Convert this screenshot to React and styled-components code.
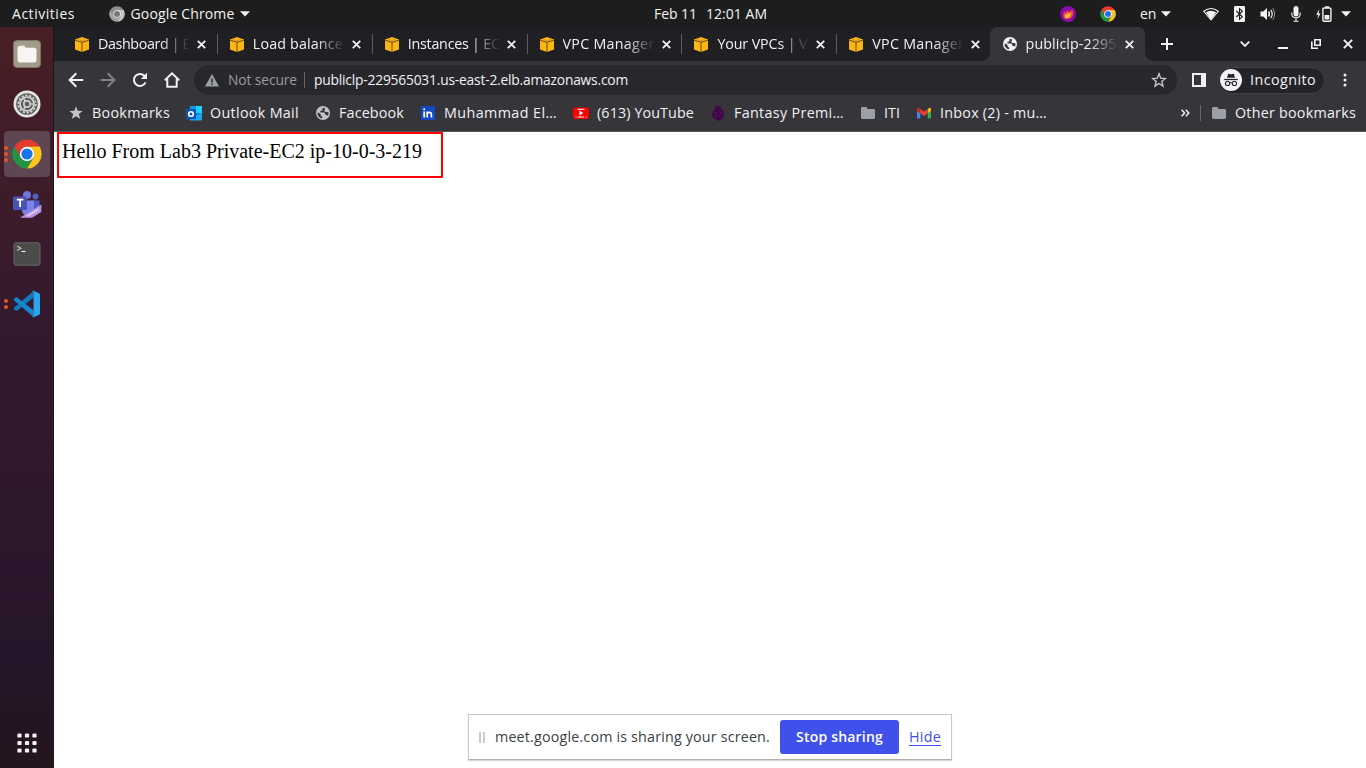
import React, { useLayoutEffect, useRef, useState } from "react";
import styled, { createGlobalStyle, css } from "styled-components";

const UI_FONT = '"Open Sans", "Noto Sans", sans-serif';

const GlobalStyle = createGlobalStyle`
  * { box-sizing: border-box; }
  html, body { margin: 0; height: 100%; overflow: hidden; }
  body { font-family: ${UI_FONT}; font-size: 14.3px; line-height: 20px; color: #f1f1f2; }
  svg { display: block; flex: none; }
`;

/* ---------- text that keeps a fixed advance width ---------- */

const FitBox = styled.span`
  flex: none;
  display: block;
  width: ${(p) => p.$w}px;
  white-space: pre;
  overflow: visible;
`;

function Fit({ w, children, className }) {
  const ref = useRef(null);
  const [spacing, setSpacing] = useState(0);
  useLayoutEffect(() => {
    const natural = ref.current.getBoundingClientRect().width;
    setSpacing((w - natural) / children.length);
  }, [w, children]);
  return (
    <FitBox $w={w} className={className}>
      <span ref={ref} style={{ letterSpacing: `${spacing}px` }}>{children}</span>
    </FitBox>
  );
}

/* ---------- page frame ---------- */

const Desktop = styled.div`
  width: 1366px;
  height: 768px;
  display: flex;
  flex-direction: column;
  overflow: hidden;
`;

const Body = styled.div`
  flex: 1;
  display: flex;
  min-height: 0;
`;

const Window = styled.div`
  flex: 1;
  min-width: 0;
  display: flex;
  flex-direction: column;
  background: #fff;
`;

/* ---------- system bar ---------- */

const SystemBar = styled.header`
  height: 27px;
  flex: none;
  display: flex;
  align-items: center;
  background: #1d1d1d;
  color: #f2f2f2;
  padding: 0 15px 0 12px;
  font-size: 14px;
`;

const Group = styled.div`
  display: flex;
  align-items: center;
  gap: ${(p) => p.$gap || 0}px;
  margin-left: ${(p) => p.$ml || 0}px;
`;

const Push = styled.div`
  flex: 1;
`;

/* ---------- dock ---------- */

const Dock = styled.nav`
  width: 54px;
  flex: none;
  display: flex;
  flex-direction: column;
  padding: 2px 0 0;
  border-right: 1px solid #20121c;
  background: linear-gradient(#481f22 0%, #431d27 12%, #3a1b2b 28%, #32192f 42%, #2f182e 60%, #26152a 85%, #24151e 100%);
`;

const DockSlot = styled.div`
  height: 50px;
  display: flex;
  align-items: center;
  justify-content: center;
  padding-left: 1px;
  position: relative;
`;

const DockTile = styled.div`
  width: 46px;
  height: 46px;
  border-radius: 4px;
  display: flex;
  align-items: center;
  justify-content: center;
  background: ${(p) => (p.$active ? "#5e4652" : "transparent")};
`;

const RunDots = styled.div`
  position: absolute;
  left: 4px;
  top: 0;
  bottom: 0;
  display: flex;
  flex-direction: column;
  justify-content: center;
  gap: 2px;
`;

const RunDot = styled.i`
  width: 4px;
  height: 4px;
  border-radius: 2px;
  background: #e95420;
`;

const AppsSlot = styled(DockSlot)`
  margin-top: auto;
`;

/* ---------- tabs ---------- */

const TabStrip = styled.div`
  height: 34px;
  flex: none;
  display: flex;
  align-items: center;
  background: #202024;
  padding: 0 13px 0 9px;
`;

const TabBox = styled.div`
  width: 154.85px;
  height: 34px;
  flex: none;
  display: flex;
  align-items: center;
  padding-left: 12px;
  position: relative;
  ${(p) => p.$line && css`
    &::after {
      content: "";
      position: absolute;
      right: 0;
      top: 7px;
      width: 1px;
      height: 20px;
      background: #5b5b60;
    }
  `}
  ${(p) => p.$active && css`
    width: 155px;
    margin-left: -2px;
    padding-left: 12.5px;
    background: #36353a;
    border-radius: 8px 8px 0 0;
    &::before, &::after {
      content: "";
      position: absolute;
      bottom: 0;
      width: 8px;
      height: 8px;
    }
    &::before { left: -8px; background: radial-gradient(circle at 0 0, transparent 7.5px, #36353a 8px); }
    &::after { right: -8px; background: radial-gradient(circle at 100% 0, transparent 7.5px, #36353a 8px); }
  `}
`;

const TabTitle = styled.div`
  width: 92px;
  margin: 0 7px 1px 9px;
  mask-image: linear-gradient(to right, #000 68%, transparent 100%);
`;

/* ---------- toolbar ---------- */

const Toolbar = styled.div`
  height: 36px;
  flex: none;
  display: flex;
  align-items: center;
  background: #36353a;
  padding: 2px 16px 0 14px;
`;

const Omnibox = styled.div`
  width: 983px;
  height: 30px;
  margin-left: 14px;
  border-radius: 15px;
  background: #28272c;
  display: flex;
  align-items: center;
  padding: 0 10px 0 11px;
  font-size: 13.8px;
`;

const Muted = styled(Fit)`
  color: #9a9ba0;
`;

const Divider = styled.i`
  width: 1px;
  height: ${(p) => p.$h}px;
  background: #66666b;
`;

const IncognitoPill = styled.div`
  width: 107px;
  height: 27px;
  margin: 0 11px 0 12px;
  border-radius: 14px;
  border: 1px solid #414045;
  background: #242428;
  display: flex;
  align-items: center;
  gap: 8px;
  padding-left: 1px;
`;

const BookmarkBar = styled.div`
  height: 35px;
  flex: none;
  display: flex;
  align-items: center;
  gap: 16px;
  background: #36353a;
  border-bottom: 1px solid #56565a;
  padding: 0 10px 2px 14px;
`;

const BookmarkItem = styled.div`
  display: flex;
  align-items: center;
  gap: 8px;
`;

const BookmarkLabel = styled(Fit)`
  padding-bottom: 1px;
`;

const Overflow = styled.div`
  display: flex;
  align-items: center;
  gap: 10px;
`;

/* ---------- page ---------- */

const Page = styled.main`
  flex: 1;
  position: relative;
  background: #fff;
`;

const Greeting = styled.div`
  width: 386px;
  height: 46px;
  margin-left: 3px;
  border: 2px solid #f00;
  border-radius: 1px;
  padding: 6px 0 0 3px;
  color: #000;
  font: 20px/23px "Liberation Serif", serif;
`;

const ShareBar = styled.div`
  position: absolute;
  left: 414px;
  top: 582px;
  width: 484px;
  height: 46px;
  display: flex;
  align-items: center;
  padding-left: 10px;
  background: #fff;
  border: 1px solid #c6c6c6;
  border-bottom-color: #b0b0b0;
  box-shadow: 0 1px 1px #d8d8d8;
  color: #3c4043;
`;

const Grip = styled.i`
  width: 6px;
  height: 11px;
  margin-right: 10px;
  border: solid #cbcbcb;
  border-width: 0 2px;
`;

const StopButton = styled.button`
  width: 119px;
  height: 34px;
  margin: 0 10px;
  padding: 0 0 1px 16px;
  border: 0;
  border-radius: 3px;
  background: #3f51ea;
  color: #fff;
  font: 600 14px ${UI_FONT};
  text-align: left;
`;

const HideLink = styled.a`
  color: #3f51ea;
  line-height: 17px;
  border-bottom: 1px solid #3f51ea;
`;

/* ---------- icons ---------- */

const ChromeLogo = ({ size, grey }) => {
  const arm = "M43.5 13A22.5 22.5 0 0 0 4.5 13L14.5 30 24 24V13Z";
  return (
    <svg width={size} height={size} viewBox="1 1 46 46">
      <path d={arm} fill={grey ? "#8c8c8c" : "#e33b2e"} />
      <path d={arm} fill={grey ? "#c4c4c4" : "#fcc31e"} transform="rotate(120 24 24)" />
      <path d={arm} fill={grey ? "#a2a2a2" : "#229342"} transform="rotate(240 24 24)" />
      <circle cx="24" cy="24" r="11" fill={grey ? "#e9e9e9" : "#fff"} />
      <circle cx="24" cy="24" r="8.6" fill={grey ? "#777" : "#1a73e8"} />
    </svg>
  );
};

const Caret = () => (
  <svg width="10" height="6" viewBox="0 0 10 6"><path d="M0 .3h10L5 5.6Z" fill="#f2f2f2" /></svg>
);

const AwsCube = () => (
  <svg width="14" height="15" viewBox="0 0 14 15">
    <path d="M0 2.4 7 0l7 2.4v10.2L7 15l-7-2.4Z" fill="#fbb616" />
    <path d="M.2 3.3 7 5.3l6.8-2M7 5.3V15" fill="none" stroke="#5c420c" strokeWidth=".9" />
    <path d="M3.2 2.7 7 3.7l3.8-1" fill="none" stroke="#b98510" strokeWidth=".6" />
  </svg>
);

const Globe = ({ color = "#f1f1f2", hole = "#36353a", size = 16, box = "0 0 16 16" }) => (
  <svg width={size} height={size} viewBox={box}>
    <circle cx="8" cy="8" r="7" fill={color} />
    <path d="M9.200 2.600 7.400 3.500v1.700l-2 .7v1.500h3.800l1.100 1.200v1.500h1.600l1 .8A5.500 5.500 0 0 0 13.500 7.600l-1-.5h-2.300l-1-1.300.9-1.600ZM2.500 7.800a5.600 5.600 0 0 0 4.700 5.600v-1.700l-1.500-1.200V9.300L4 7.800Z" fill={hole} />
  </svg>
);

const CloseX = ({ size = 9, w = 1.9 }) => (
  <svg width={size} height={size} viewBox="0 0 9 9"><path d="m.8.8 7.4 7.4m0-7.4L.8 8.2" stroke="#f1f1f2" strokeWidth={w} /></svg>
);

const NavIcon = ({ color = "#f1f1f2", children }) => (
  <svg width="16" height="16" viewBox="0 0 16 16" fill="none" stroke={color} strokeWidth="2">{children}</svg>
);

const Folder = () => (
  <svg width="16" height="16" viewBox="0 0 16 16"><path d="M1 3.4Q1 2 2.4 2h3.8l1.6 2h5.8Q15 4 15 5.4v7.2q0 1.4-1.4 1.4H2.4Q1 14 1 12.6Z" fill="#9aa0a6" /></svg>
);

const bookmarkIcons = {
  star: (
    <svg width="16" height="16" viewBox="0 0 16 16"><path d="m8 1.3 1.7 4.5 5 .2-3.9 3 1.4 4.9L8 11.2l-4.2 2.7L5.200 9 1.300 6l5-.2Z" fill="#bfc2c8" /></svg>
  ),
  outlook: (
    <svg width="16" height="16" viewBox="0 0 16 16">
      <path d="M4 1h12v14H4Z" fill="#0a8be0" />
      <path d="M4 1h6v6H4Z" fill="#1494e8" />
      <path d="M10 1h6v7h-6Z" fill="#1fd0fa" />
      <path d="m3 15 13-7v6q0 1.500-1 1.500H4Z" fill="#1da4f2" />
      <rect y="4" width="10" height="10" rx="1" fill="#0a57b8" />
      <circle cx="5" cy="9" r="2.300" fill="none" stroke="#fff" strokeWidth="1.600" />
    </svg>
  ),
  globe: <Globe color="#bfc2c8" />,
  linkedin: (
    <svg width="16" height="16" viewBox="0 0 16 16">
      <rect x="1" y="1" width="14" height="14" fill="#1448c4" />
      <path d="M4.200 6.500V12.500M7.200 12.500V6.500M7.200 9.500Q7.200 7.300 9.300 7.300T11.400 9.500V12.500" fill="none" stroke="#fff" strokeWidth="1.700" />
      <circle cx="4.200" cy="4.200" r="1.050" fill="#fff" />
    </svg>
  ),
  youtube: (
    <svg width="16" height="16" viewBox="0 0 16 16">
      <rect y="2.500" width="16" height="11.500" rx="2.500" fill="#f00" />
      <path d="M4.500 4.300h7M2.500 12h1.200M5 12h6M12.500 12h1" stroke="#fff" strokeWidth="1" />
      <path d="M6.500 5.600 10.300 8l-3.800 2.400Z" fill="#fff" />
    </svg>
  ),
  lion: (
    <svg width="16" height="16" viewBox="0 0 16 16">
      <path d="M5 3.800 4.300 1l2 1L7.500.300 8.800 1.800 11 .800l-.5 2.900q3.300 1.300 3.500 5 0 3-2 4.500l-1.500 2.500-3.500-.4-2.500-2.300-2.300-.3.3-2.200-.7-1.300 1.200-1.400Q3 5 5 3.800Z" fill="#41054a" />
      <path d="m4.500 7.500 2 .5M5 11l2-.6M9.500 6l1.500 2.500" stroke="#6d2c6b" strokeWidth=".6" fill="none" />
    </svg>
  ),
  folder: <Folder />,
  gmail: (
    <svg width="16" height="16" viewBox="0 0 16 16">
      <path d="M1 4.500 4.300 7v6.500H2q-1 0-1-1Z" fill="#4285f4" />
      <path d="M15 4.500 11.700 7v6.500H14q1 0 1-1Z" fill="#34a853" />
      <path d="M11.700 4 13 3q2-.7 2 1.500v1.200l-3.300 2.500Z" fill="#fbbc04" />
      <path d="M1 4.500Q1 2.300 3 3l5 3.700L11.700 4v4.200L8 11 1 5.700Z" fill="#ea4335" />
      <path d="M1 4.500Q1 2.300 3 3l1.300 1v4.200L1 5.700Z" fill="#c5221f" />
    </svg>
  ),
};

const Incognito = () => (
  <svg width="22" height="22" viewBox="0 0 22 22">
    <circle cx="11" cy="11" r="11" fill="#f1f3f4" />
    <path d="m7 8.800 1.200-4 2.800.5 2.800-.5 1.200 4Z" fill="#27272b" />
    <path d="M4.200 10.500h13.600" stroke="#27272b" strokeWidth="1.200" />
    <circle cx="7.600" cy="14.400" r="2.100" fill="none" stroke="#27272b" strokeWidth="1.100" />
    <circle cx="14.400" cy="14.400" r="2.100" fill="none" stroke="#27272b" strokeWidth="1.100" />
    <path d="M9.700 14q1.300-.7 2.600 0" fill="none" stroke="#27272b" />
  </svg>
);

const FilesIcon = () => (
  <svg width="28" height="28" viewBox="0 0 28 28">
    <rect x=".5" y=".5" width="27" height="27" rx="3.500" fill="#a29a88" stroke="#7b7464" />
    <path d="M4.500 8q0-2.500 2.500-2.500h4q1 0 1.500 1.500h-8Z" fill="#dcd8cf" />
    <path d="M4.500 8.500q0-2 2-2h4.500l2 1.200h8q2.500 0 2.500 2.500v9.500q0 2.800-2.800 2.800H7.300q-2.800 0-2.800-2.800Z" fill="#f7f5f1" />
  </svg>
);

const SettingsIcon = () => (
  <svg width="28" height="28" viewBox="0 0 28 28">
    <circle cx="14" cy="14" r="13.500" fill="#e4e4e2" />
    <circle cx="14" cy="14" r="10.800" fill="#5b5d5c" />
    <circle cx="14" cy="14" r="8.700" fill="none" stroke="#d4d5d3" strokeWidth="1.700" strokeDasharray="2.300 1.600" />
    <circle cx="14" cy="14" r="7" fill="none" stroke="#d4d5d3" strokeWidth="1.700" />
    <circle cx="14" cy="14" r="3.200" fill="none" stroke="#cfd0ce" strokeWidth="1.700" />
    <path d="M17 14h4M12.400 11.300l-2-3.500M12.400 16.700l-2 3.500" stroke="#cfd0ce" strokeWidth="1.400" />
  </svg>
);

const TeamsIcon = () => (
  <svg width="30" height="30" viewBox="0 -1.500 30 30">
    <circle cx="15" cy="4.500" r="4" fill="#6f76d9" />
    <circle cx="23.500" cy="6" r="2.900" fill="#5560c4" />
    <path d="M19 10h8.500v7q0 5-5 5H19Z" fill="#505ac0" />
    <path d="M10 10h12v9q0 6-6 6t-6-6Z" fill="#7b83eb" />
    <rect x="1" y="6" width="14" height="13.500" rx="1.200" fill="#4a52b4" />
    <path d="M4.800 9.200h6.600M8.100 9.200V16.500" stroke="#fff" strokeWidth="1.800" />
    <path d="M8 27.300 29.300 14v7.500L20 27.300Z" fill="#b695e8" />
    <path d="m15.500 25.500 11.500-7" stroke="#f0e6fb" strokeWidth="2" strokeDasharray="1.100 .8" />
  </svg>
);

const TerminalIcon = () => (
  <svg width="28" height="24" viewBox="0 0 28 24">
    <rect x="1" y=".8" width="26" height="22.400" rx="2" fill="#4b4b4a" stroke="#686765" />
    <path d="m4 4 4 2.200-4 2.200" fill="none" stroke="#c4c4c3" strokeWidth="1.100" />
    <path d="M8.500 9.500h4" stroke="#f2f2f2" strokeWidth="1.100" />
  </svg>
);

const VsCodeIcon = () => (
  <svg width="28" height="28" viewBox="0 0 28 28">
    <path d="M20.500 1v6.800L4.300 20.600q-.8.500-1.500 0L1.200 19.200q-.8-.8 0-1.700Z" fill="#0f79bd" />
    <path d="M20.500 27v-6.800L4.300 7.400q-.8-.5-1.500 0L1.200 8.800q-.8.800 0 1.700Z" fill="#1486cc" />
    <path d="M20.500.800 26 3.300q1 .5 1 1.500v18.400q0 1-1 1.500l-5.500 2.500q-.8.200-1.500-.5 1.500.2 1.500-1.500V2.800Q20.500 1 19 1.300q.7-.7 1.500-.5Z" fill="#2ba5ee" />
  </svg>
);

const AppsGrid = () => (
  <svg width="20" height="20" viewBox="0 0 20 20" fill="#f4f2f3">
    {[0, 7.500, 15].map((y) => [0, 7.500, 15].map((x) => (
      <rect key={`${x}-${y}`} x={x + 0.4} y={y + 0.4} width="4.200" height="4.200" rx="1.200" />
    )))}
  </svg>
);

const FlameIcon = () => (
  <svg width="16" height="16" viewBox="0 0 16 16">
    <circle cx="8" cy="8" r="8" fill="#8a0bab" />
    <path d="M3.500 11.500Q2.300 8.500 4.200 5l1 2L8 3.500l.3 3L12.800 3q-.5 2-.3 3l1.300-.6Q13 13 7.300 13.200q-2.800.2-3.800-1.700Z" fill="#f5443b" />
    <path d="M4.800 11Q4.500 9 5.500 8l1 .8L8.500 6l.3 2 2.500-1.500Q10.500 12 7 12.300q-1.500 0-2.200-1.300Z" fill="#ffc02e" />
  </svg>
);

const WifiIcon = () => (
  <svg width="16" height="14" viewBox="0 0 16 14">
    <path d="M.7 4.300Q8-1.300 15.300 4.300L8 13Z" fill="none" stroke="#f2f2f2" strokeWidth="1.100" />
    <path d="M2.900 5.300Q8 2 13.100 5.300L8 13Z" fill="#f2f2f2" />
  </svg>
);

const BluetoothIcon = () => (
  <svg width="11" height="16" viewBox="0 0 11 16">
    <rect width="11" height="16" rx="1.200" fill="#f2f2f2" />
    <path d="m2.300 5 6 5.800-2.800 2.500V2.700l2.800 2.500-6 5.800" fill="none" stroke="#1d1d1d" strokeWidth="1.100" />
  </svg>
);

const VolumeIcon = () => (
  <svg width="16" height="14" viewBox="0 0 16 14" fill="none" stroke="#f2f2f2">
    <path d="M.5 4.500h2.800L7 1v12L3.300 9.500H.5Z" fill="#f2f2f2" stroke="none" />
    <path d="M8.500 4.500q1.800 2.500 0 5" strokeWidth="1.500" />
    <path d="M10.700 2.800q3 4.200 0 8.400" strokeWidth="1.200" />
    <path d="M12.800 1.200q3.600 5.800 0 11.600" stroke="#999" />
  </svg>
);

const MicIcon = () => (
  <svg width="10" height="16" viewBox="0 0 10 16">
    <rect x="2.500" y="0" width="5" height="10.500" rx="2.500" fill="#f2f2f2" />
    <path d="M.8 6.500v1.800Q1 11.700 5 11.800T9.200 8.300V6.500M5 12v3M2.500 15.300h5" fill="none" stroke="#f2f2f2" strokeWidth="1.100" />
  </svg>
);

const BatteryIcon = () => (
  <svg width="16" height="16" viewBox="0 0 16 16">
    <path d="M3.300 3.200.2 8.800h2L1.500 13l3-5.600H2.600Z" fill="#f2f2f2" />
    <rect x="6.900" y="2" width="8" height="13.200" rx="1" fill="none" stroke="#f2f2f2" strokeWidth="1.400" />
    <path d="M9 .3h4v1.500H9ZM8.500 9h4.800v4.500H8.500Z" fill="#f2f2f2" />
  </svg>
);

/* ---------- content ---------- */

const tabs = [
  ["Dashboard | E", 92],
  ["Load balance", 90],
  ["Instances | EC", 92],
  ["VPC Manager", 92],
  ["Your VPCs | V", 90],
  ["VPC Manager", 92],
];

const bookmarks = [
  ["star", "Bookmarks", 78],
  ["outlook", "Outlook Mail", 89],
  ["globe", "Facebook", 65],
  ["linkedin", "Muhammad El…", 113],
  ["youtube", "(613) YouTube", 97],
  ["lion", "Fantasy Premi…", 110],
  ["folder", "ITI", 16],
  ["gmail", "Inbox (2) - mu…", 107],
];

function Tab({ icon, title, w, active, line }) {
  return (
    <TabBox $active={active} $line={line}>
      {icon}
      <TabTitle><Fit w={w}>{title}</Fit></TabTitle>
      <CloseX />
    </TabBox>
  );
}

function DockApp({ icon, dots = 0, active }) {
  return (
    <DockSlot>
      <DockTile $active={active}>{icon}</DockTile>
      {dots > 0 && <RunDots>{Array.from({ length: dots }, (_, i) => <RunDot key={i} />)}</RunDots>}
    </DockSlot>
  );
}

export default function App() {
  return (
    <Desktop>
      <GlobalStyle />
      <SystemBar>
        <Fit w={63}>Activities</Fit>
        <Group $ml={34} $gap={5.5}>
          <ChromeLogo size={16} grey />
          <Fit w={104}>Google Chrome</Fit>
          <Caret />
        </Group>
        <Group $ml={404} $gap={9}>
          <Fit w={43}>Feb 11</Fit>
          <Fit w={61}>12:01 AM</Fit>
        </Group>
        <Push />
        <Group $gap={24}>
          <FlameIcon />
          <ChromeLogo size={16} />
          <Group $gap={5}><Fit w={16}>en</Fit><Caret /></Group>
        </Group>
        <Group $ml={32} $gap={15}>
          <WifiIcon />
          <BluetoothIcon />
          <VolumeIcon />
          <MicIcon />
          <BatteryIcon />
        </Group>
        <Group $ml={9}><Caret /></Group>
      </SystemBar>

      <Body>
        <Dock>
          <DockApp icon={<FilesIcon />} />
          <DockApp icon={<SettingsIcon />} />
          <DockApp icon={<ChromeLogo size={30} />} dots={3} active />
          <DockApp icon={<TeamsIcon />} />
          <DockApp icon={<TerminalIcon />} />
          <DockApp icon={<VsCodeIcon />} dots={2} />
          <AppsSlot><AppsGrid /></AppsSlot>
        </Dock>

        <Window>
          <TabStrip>
            {tabs.map(([title, w], i) => (
              <Tab key={i} icon={<AwsCube />} title={title} w={w} line={i < 5} />
            ))}
            <Tab icon={<Globe size={14} box="1 1 14 14" hole="#3d3c41" />} title="publiclp-2295" w={91} active />
            <Group $ml={16}>
              <svg width="12" height="12" viewBox="0 0 12 12"><path d="M6 0v12M0 6h12" stroke="#f1f1f2" strokeWidth="2" /></svg>
            </Group>
            <Push />
            <Group $gap={28}>
              <svg width="10" height="6" viewBox="0 0 10 6"><path d="m.7.7 4.300 4.200L9.300.700" fill="none" stroke="#f1f1f2" strokeWidth="1.800" /></svg>
              <Group $gap={22.500}>
                <svg width="10" height="10" viewBox="0 0 10 10"><path d="M0 9h10" stroke="#f1f1f2" strokeWidth="2" /></svg>
                <svg width="10" height="10" viewBox="0 0 10 10"><path d="M3.800.800h5.400v5.400H3.800ZM.8 2.500v6.700H7" fill="none" stroke="#f1f1f2" strokeWidth="1.600" /></svg>
                <CloseX size={10} w={1.8} />
              </Group>
            </Group>
          </TabStrip>

          <Toolbar>
            <Group $gap={16}>
              <NavIcon><path d="M15.300 8H2M8.300 1.300 1.600 8l6.700 6.700" /></NavIcon>
              <NavIcon color="#808085"><path d="M.7 8H14M7.700 1.300 14.400 8l-6.700 6.700" /></NavIcon>
              <NavIcon><path d="M13.500 10.300A6 6 0 1 1 12.300 3.800L14 5.500" /><path d="M15 .8v6.100H8.900Z" fill="#f1f1f2" stroke="none" /></NavIcon>
              <NavIcon><path d="M.8 8.300 8 1.400l7.200 6.900M3.300 7v7.700h9.400V7" /></NavIcon>
            </Group>
            <Omnibox>
              <svg width="14" height="13" viewBox="0 0 14 13"><path d="M7 0 14 12.500H0Z" fill="#9aa0a6" /><path d="M7 4.500v4M7 9.500v1.600" stroke="#28272c" strokeWidth="1.500" /></svg>
              <Group $ml={9} $gap={7}>
                <Muted w={69}>Not secure</Muted>
                <Divider $h={16} />
              </Group>
              <Group $ml={9}><Fit w={314}>publiclp-229565031.us-east-2.elb.amazonaws.com</Fit></Group>
              <Push />
              <svg width="16" height="16" viewBox="0 0 16 16"><path d="m8 1.800 1.700 4.400 4.700.300-3.600 3 1.200 4.600L8 11.500l-4 2.600 1.200-4.600-3.600-3 4.700-.3Z" fill="none" stroke="#c6c6ca" strokeWidth="1.400" /></svg>
            </Omnibox>
            <Group $ml={15}>
              <svg width="14" height="14" viewBox="0 0 14 14"><path d="M1 1h12v12H1Z" fill="none" stroke="#f1f1f2" strokeWidth="2" /><path d="M9 0h5v14H9Z" fill="#f1f1f2" /></svg>
            </Group>
            <IncognitoPill>
              <Incognito />
              <Fit w={66}>Incognito</Fit>
            </IncognitoPill>
            <Push />
            <svg width="10" height="14" viewBox="0 0 10 14" fill="#f1f1f2"><circle cx="5" cy="2" r="1.500" /><circle cx="5" cy="7" r="1.500" /><circle cx="5" cy="12" r="1.500" /></svg>
          </Toolbar>

          <BookmarkBar>
            {bookmarks.map(([icon, label, w]) => (
              <BookmarkItem key={label}>
                {bookmarkIcons[icon]}
                <BookmarkLabel w={w}>{label}</BookmarkLabel>
              </BookmarkItem>
            ))}
            <Push />
            <Overflow>
              <svg width="9" height="8" viewBox="0 0 9 8"><path d="m.6.800 3 3.200-3 3.200M4.800.800l3 3.200-3 3.200" fill="none" stroke="#f1f1f2" strokeWidth="1.500" /></svg>
              <Divider $h={16} />
              <BookmarkItem><Folder /><BookmarkLabel w={121}>Other bookmarks</BookmarkLabel></BookmarkItem>
            </Overflow>
          </BookmarkBar>

          <Page>
            <Greeting><Fit w={360}>Hello From Lab3 Private-EC2 ip-10-0-3-219</Fit></Greeting>
            <ShareBar>
              <Grip />
              <Fit w={275}>meet.google.com is sharing your screen.</Fit>
              <StopButton><Fit w={87}>Stop sharing</Fit></StopButton>
              <HideLink><Fit w={32}>Hide</Fit></HideLink>
            </ShareBar>
          </Page>
        </Window>
      </Body>
    </Desktop>
  );
}
